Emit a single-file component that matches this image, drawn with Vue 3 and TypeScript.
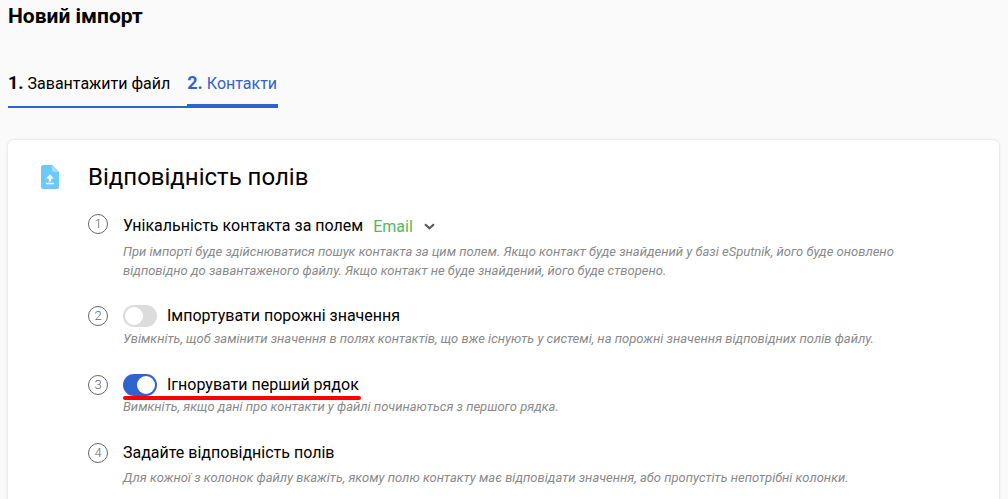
<script setup lang="ts">
interface Step {
  n: number
  title: string
  desc: string[]
  toggle?: 'on' | 'off'
}
const steps: Step[] = [
  {
    n: 1,
    title: 'Унікальність контакта за полем',
    desc: [
      'При імпорті буде здійснюватися пошук контакта за цим полем. Якщо контакт буде знайдений у базі eSputnik, його буде оновлено',
      'відповідно до завантаженого файлу. Якщо контакт не буде знайдений, його буде створено.'
    ]
  },
  {
    n: 2,
    title: 'Імпортувати порожні значення',
    toggle: 'off',
    desc: ['Увімкніть, щоб замінити значення в полях контактів, що вже існують у системі, на порожні значення відповідних полів файлу.']
  },
  {
    n: 3,
    title: 'Ігнорувати перший рядок',
    toggle: 'on',
    desc: ['Вимкніть, якщо дані про контакти у файлі починаються з першого рядка.']
  },
  {
    n: 4,
    title: 'Задайте відповідність полів',
    desc: ['Для кожної з колонок файлу вкажіть, якому полю контакту має відповідати значення, або пропустіть непотрібні колонки.']
  }
]
</script>

<template>
  <div class="page">
    <h1 class="title">Новий імпорт</h1>
    <div class="tabs">
      <div class="tab"><b>1.</b> Завантажити файл</div>
      <div class="tab active"><b>2.</b> Контакти</div>
    </div>
    <section class="card">
      <div class="head">
        <svg class="file" width="18" height="24" viewBox="0 0 18 24">
          <path d="M2 0H11L18 7V22a2 2 0 0 1-2 2H2a2 2 0 0 1-2-2V2a2 2 0 0 1 2-2Z" fill="#6cc9f7" />
          <path d="M11 0L18 7H13a2 2 0 0 1-2-2Z" fill="#a5def9" />
          <path d="M9 9.5L13 13.5H10.2V16.5H7.8V13.5H5Z M5 17.8H13V19.2H5Z" fill="#fff" />
        </svg>
        <h2 class="heading">Відповідність полів</h2>
      </div>
      <div class="steps">
        <div v-for="s in steps" :key="s.n" class="step" :class="'step-' + s.n">
          <span class="num">{{ s.n }}</span>
          <div class="body">
            <div class="row">
              <span v-if="s.toggle" class="switch" :class="s.toggle"><i class="knob"></i></span>
              <span class="label">{{ s.title }}</span>
              <template v-if="s.n === 1">
                <span class="email">Email</span>
                <svg class="chev" width="11" height="7" viewBox="0 0 11 7">
                  <path d="M1 1.2L5.5 5.2L10 1.2" fill="none" stroke="#5a5a5a" stroke-width="2.2" />
                </svg>
              </template>
              <span v-if="s.n === 3" class="redline"></span>
            </div>
            <p v-for="line in s.desc" :key="line" class="desc">{{ line }}</p>
          </div>
        </div>
      </div>
    </section>
  </div>
</template>

<style>
html, body { margin: 0; background: #fafafa; overflow: hidden; }
</style>

<style scoped>
.page {
  height: 499px;
  overflow: hidden;
  padding: 0 8px;
  box-sizing: border-box;
  background: #fafafa;
  font-family: Roboto, sans-serif;
  color: #000;
}
.title {
  margin: 0;
  padding-top: 4px;
  font-size: 21px;
  line-height: 24px;
  font-weight: 700;
}
.tabs {
  display: flex;
  align-items: flex-end;
  margin-top: 44px;
  height: 36px;
}
.tab {
  font-size: 16px;
  line-height: 19px;
  padding-bottom: 13px;
  padding-right: 17px;
  border-bottom: 2px solid #2f64cf;
}
.tab b { font-size: 18px; font-weight: 700; }
.tab.active {
  color: #2f64cf;
  padding-right: 1px;
  padding-bottom: 11px;
  border-bottom-width: 4px;
}
.card {
  margin-top: 32px;
  width: 991px;
  height: 400px;
  background: #fff;
  border-radius: 6px;
  box-shadow: 0 0 3px rgba(0, 0, 0, 0.16);
  box-sizing: border-box;
  padding: 22px 0 0 33px;
}
.head {
  display: flex;
  align-items: center;
  height: 30px;
}
.file { flex: none; }
.heading {
  margin: 0 0 0 29px;
  font-size: 24px;
  line-height: 30px;
  font-weight: 400;
}
.steps {
  margin: 21px 0 0 47px;
}
.step { display: flex; }
.step-1 { height: 92px; }
.step-2 { height: 69px; }
.step-3 { height: 68px; }
.num {
  flex: none;
  width: 18px;
  height: 18px;
  border: 1px solid #666;
  border-radius: 50%;
  margin-top: 1px;
  font-size: 13px;
  line-height: 18px;
  text-align: center;
  color: #666;
  font-weight: 300;
}
.body { margin-left: 15px; }
.row {
  position: relative;
  display: flex;
  align-items: center;
  height: 22px;
}
.step-1 .row { height: 24px; padding-top: 2px; box-sizing: border-box; }
.label {
  font-size: 16px;
  line-height: 22px;
}
.email {
  margin-left: 10px;
  font-size: 16px;
  color: #4cbb5f;
}
.chev { margin-left: 11px; }
.switch {
  display: block;
  width: 34px;
  height: 22px;
  border-radius: 11px;
  margin-right: 10px;
  flex: none;
  position: relative;
}
.switch.off { background: #dcdcdc; }
.switch.on { background: #2f64cf; }
.knob {
  position: absolute;
  top: 2px;
  width: 18px;
  height: 18px;
  background: #fff;
  border-radius: 50%;
}
.off .knob { left: 2px; }
.on .knob { right: 2px; }
.redline {
  position: absolute;
  left: 0;
  top: 22px;
  width: 238px;
  height: 4px;
  background: #f00;
  border-radius: 2px;
}
.desc {
  margin: 0;
  font-size: 13px;
  line-height: 19px;
  font-style: italic;
  color: #8a8a8a;
  white-space: nowrap;
}
.step-1 .desc:first-of-type { margin-top: 5px; }
.step-2 .desc { margin-top: 2px; }
.step-3 .desc { margin-top: 1px; }
.step-4 .desc { margin-top: 4px; }
</style>
